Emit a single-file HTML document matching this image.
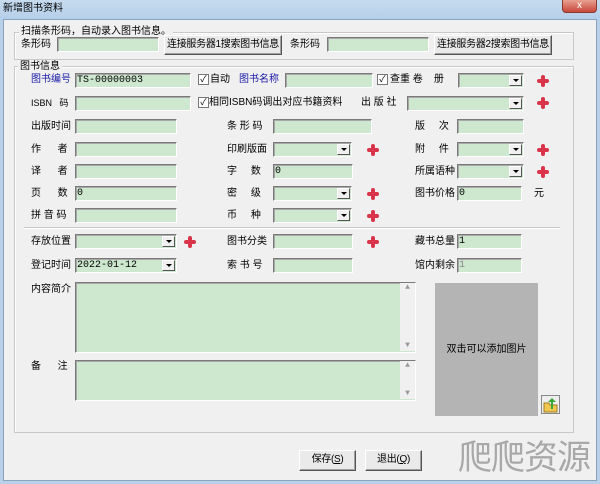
<!DOCTYPE html>
<html><head><meta charset="utf-8"><style>
*{margin:0;padding:0;box-sizing:border-box}
body{width:600px;height:484px;position:relative;overflow:hidden;background:#b9d1e8;font-family:"Liberation Sans","Noto Sans CJK SC","WenQuanYi Zen Hei",sans-serif;font-size:10px;color:#000}
.a{position:absolute;white-space:nowrap;line-height:14px}
.title{position:absolute;left:0;top:0;width:600px;height:20px;background:linear-gradient(#c6dbef,#b5cfe9)}
.client{position:absolute;left:3px;top:19px;width:594px;height:462px;background:#f0f0f0;border:1px solid #8aa4c0}
.grp{position:absolute;border:1px solid #c8c8c8;box-shadow:inset 1px 1px 0 #fff}
.in{position:absolute;height:15px;background:#cde8cf;border:1px solid;border-color:#7a7a7a #fff #fff #7a7a7a;box-shadow:inset 1px 1px 0 #a8a8a8;font-size:10px;line-height:13px;padding-left:1px;font-family:"Liberation Mono","Noto Sans CJK SC",monospace;white-space:nowrap;overflow:hidden}
.dd{position:absolute;right:1px;top:1px;width:13px;height:11px;background:#f0f0f0;border:1px solid;border-color:#fff #555 #555 #fff}
.dd:after{content:"";position:absolute;left:3px;top:3px;border:3px solid transparent;border-top:3px solid #000;border-bottom:0}
.btn{position:absolute;background:#eaeaea;border:1px solid;border-color:#fff #555 #555 #fff;box-shadow:inset -1px -1px 0 #a0a0a0;text-align:center;line-height:18px;white-space:nowrap;overflow:hidden;font-size:10px;letter-spacing:-0.3px}
.plus{position:absolute;width:12px;height:12px}
.plus:before,.plus:after{content:"";position:absolute;background:#d9344a;border-radius:2px}
.plus:before{left:4px;top:0;width:4px;height:12px}
.plus:after{left:0;top:4px;width:12px;height:4px}
.cb{position:absolute;width:11px;height:11px;border:1px solid #777;background:#fff;font-size:9px;line-height:9px;text-align:center}
.blue{color:#1a1aa6}
</style></head><body>
<div class="title"></div>
<div class="a" style="left:3px;top:2px">新增图书资料</div>
<div style="position:absolute;left:562px;top:0;width:35px;height:13px;background:linear-gradient(#e8a090,#c7473a);border:1px solid #8a3a30;border-top:0;border-radius:0 0 4px 4px;color:#fff;font-size:10px;text-align:center;line-height:11px">x</div>
<div class="client"></div>

<div class="grp" style="left:14px;top:32px;width:560px;height:28px"></div>
<div class="a" style="left:19px;top:25px;background:#f0f0f0;padding:0 2px">扫描条形码，自动录入图书信息。</div>
<div class="a" style="left:21px;top:38px">条形码</div>
<div class="in" style="left:57px;top:37px;width:102px"></div>
<div class="btn" style="left:164px;top:35px;width:118px;height:20px">连接服务器1搜索图书信息</div>
<div class="a" style="left:290px;top:38px">条形码</div>
<div class="in" style="left:327px;top:37px;width:102px"></div>
<div class="btn" style="left:434px;top:35px;width:118px;height:20px">连接服务器2搜索图书信息</div>

<div class="grp" style="left:14px;top:66px;width:560px;height:367px"></div>
<div class="a" style="left:18px;top:60px;background:#f0f0f0;padding:0 2px">图书信息</div>

<div class="a blue" style="left:31px;top:73px">图书编号</div>
<div class="in" style="left:75px;top:73px;width:116px">TS-00000003</div>
<div class="cb" style="left:198px;top:74px">✓</div><div class="a" style="left:210px;top:73px">自动</div>
<div class="a blue" style="left:239px;top:73px">图书名称</div>
<div class="in" style="left:285px;top:73px;width:88px"></div>
<div class="cb" style="left:377px;top:74px">✓</div><div class="a" style="left:390px;top:73px">查重 卷&nbsp;&nbsp;&nbsp;&nbsp;册</div>
<div class="in" style="left:458px;top:73px;width:66px"><div class="dd"></div></div>
<div class="plus" style="left:537px;top:75px"></div>

<div class="a" style="left:31px;top:96px;font-size:9px">ISBN&nbsp;&nbsp;&nbsp;码</div>
<div class="in" style="left:75px;top:96px;width:116px"></div>
<div class="cb" style="left:198px;top:97px">✓</div><div class="a" style="left:209px;top:96px">相同ISBN码调出对应书籍资料</div>
<div class="a" style="left:361px;top:96px">出 版 社</div>
<div class="in" style="left:407px;top:96px;width:117px"><div class="dd"></div></div>
<div class="plus" style="left:537px;top:97px"></div>

<div class="a" style="left:31px;top:120px">出版时间</div>
<div class="in" style="left:75px;top:119px;width:102px"></div>
<div class="a" style="left:227px;top:120px">条 形 码</div>
<div class="in" style="left:273px;top:119px;width:99px"></div>
<div class="a" style="left:415px;top:120px">版&nbsp;&nbsp;&nbsp;&nbsp;&nbsp;次</div>
<div class="in" style="left:457px;top:119px;width:67px"></div>

<div class="a" style="left:31px;top:143px">作&nbsp;&nbsp;&nbsp;&nbsp;&nbsp;&nbsp;者</div>
<div class="in" style="left:75px;top:142px;width:102px"></div>
<div class="a" style="left:227px;top:143px">印刷版面</div>
<div class="in" style="left:273px;top:142px;width:79px"><div class="dd"></div></div>
<div class="plus" style="left:367px;top:144px"></div>
<div class="a" style="left:415px;top:143px">附&nbsp;&nbsp;&nbsp;&nbsp;&nbsp;件</div>
<div class="in" style="left:457px;top:142px;width:67px"><div class="dd"></div></div>
<div class="plus" style="left:537px;top:144px"></div>

<div class="a" style="left:31px;top:165px">译&nbsp;&nbsp;&nbsp;&nbsp;&nbsp;&nbsp;者</div>
<div class="in" style="left:75px;top:164px;width:102px"></div>
<div class="a" style="left:227px;top:165px">字&nbsp;&nbsp;&nbsp;&nbsp;&nbsp;数</div>
<div class="in" style="left:273px;top:164px;width:80px">0</div>
<div class="a" style="left:415px;top:165px">所属语种</div>
<div class="in" style="left:457px;top:164px;width:67px"><div class="dd"></div></div>
<div class="plus" style="left:537px;top:166px"></div>

<div class="a" style="left:31px;top:187px">页&nbsp;&nbsp;&nbsp;&nbsp;&nbsp;&nbsp;数</div>
<div class="in" style="left:75px;top:186px;width:102px">0</div>
<div class="a" style="left:227px;top:187px">密&nbsp;&nbsp;&nbsp;&nbsp;&nbsp;级</div>
<div class="in" style="left:273px;top:186px;width:79px"><div class="dd"></div></div>
<div class="plus" style="left:367px;top:188px"></div>
<div class="a" style="left:415px;top:187px">图书价格</div>
<div class="in" style="left:457px;top:186px;width:65px">0</div>
<div class="a" style="left:534px;top:187px">元</div>

<div class="a" style="left:31px;top:209px">拼 音 码</div>
<div class="in" style="left:75px;top:208px;width:102px"></div>
<div class="a" style="left:227px;top:209px">币&nbsp;&nbsp;&nbsp;&nbsp;&nbsp;种</div>
<div class="in" style="left:273px;top:208px;width:79px"><div class="dd"></div></div>
<div class="plus" style="left:367px;top:210px"></div>
<div style="position:absolute;left:24px;top:227px;width:536px;height:2px;border-top:1px solid #c8c8c8;border-bottom:1px solid #fff"></div>

<div class="a" style="left:31px;top:235px">存放位置</div>
<div class="in" style="left:75px;top:234px;width:102px"><div class="dd"></div></div>
<div class="plus" style="left:184px;top:236px"></div>
<div class="a" style="left:227px;top:235px">图书分类</div>
<div class="in" style="left:273px;top:234px;width:80px"></div>
<div class="plus" style="left:367px;top:236px"></div>
<div class="a" style="left:415px;top:235px">藏书总量</div>
<div class="in" style="left:457px;top:234px;width:65px">1</div>

<div class="a" style="left:31px;top:259px">登记时间</div>
<div class="in" style="left:75px;top:258px;width:102px">2022-01-12<div class="dd"></div></div>
<div class="a" style="left:227px;top:259px">索 书 号</div>
<div class="in" style="left:273px;top:258px;width:80px"></div>
<div class="a" style="left:415px;top:259px">馆内剩余</div>
<div class="in" style="left:457px;top:258px;width:65px;color:#888">1</div>

<div class="a" style="left:31px;top:283px">内容简介</div>
<div class="in" style="left:75px;top:282px;width:341px;height:71px"><div style="position:absolute;right:0;top:0;width:15px;height:68px;background:#f0f0f0;color:#999;font-size:8px;text-align:center;line-height:10px">▲<div style="position:absolute;bottom:0;width:15px">▼</div></div></div>
<div class="a" style="left:31px;top:360px">备&nbsp;&nbsp;&nbsp;&nbsp;&nbsp;&nbsp;注</div>
<div class="in" style="left:75px;top:360px;width:341px;height:41px"><div style="position:absolute;right:0;top:0;width:15px;height:38px;background:#f0f0f0;color:#999;font-size:8px;text-align:center;line-height:10px">▲<div style="position:absolute;bottom:0;width:15px">▼</div></div></div>
<div style="position:absolute;left:435px;top:283px;width:103px;height:133px;background:#b4b4b4;text-align:center;line-height:133px;font-size:10px">双击可以添加图片</div>
<svg style="position:absolute;left:541px;top:395px" width="19" height="19"><rect x="0.5" y="0.5" width="18" height="18" fill="#eee" stroke="#888"/><path d="M3 8h5l1 2h7v7H3z" fill="#f0c850" stroke="#a07a20"/><path d="M10 14V7h-3l4-4 4 4h-3v7z" fill="#3aa838"/></svg>
<div class="btn" style="left:299px;top:450px;width:57px;height:21px">保存(<u>S</u>)</div>
<div class="btn" style="left:365px;top:450px;width:57px;height:21px">退出(<u>Q</u>)</div>
<div class="a" style="left:458px;top:436px;font-size:34px;line-height:44px;color:#a8a8a8;letter-spacing:-1px">爬爬资源</div>
</body></html>
